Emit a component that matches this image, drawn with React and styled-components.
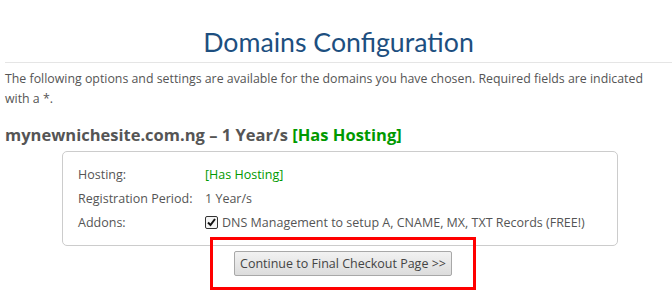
import React from 'react';
import styled, { createGlobalStyle } from 'styled-components';

const GlobalStyle = createGlobalStyle`
    body {
        margin: 0;
        background: #fff;
        font-family: "Open Sans", Lato, sans-serif;
        color: #555;
    }
`;

const Page = styled.div`
    width: 672px;
    padding: 0 0 0 5px;
    box-sizing: border-box;
`;

const Title = styled.h1`
    margin: 0;
    padding: 28px 0 6px;
    text-align: center;
    font-family: Lato, sans-serif;
    font-size: 26.7px;
    font-weight: 400;
    color: #1d4f80;
    border-bottom: 1px solid #e5e5e5;
    line-height: 28px;
`;

const Intro = styled.p`
    margin: 0;
    max-width: 655px;
    padding-top: 6px;
    font-size: 12.35px;
    line-height: 20px;
`;

const DomainHeading = styled.h2`
    margin: 0;
    padding-top: 16px;
    font-size: 16.5px;
    font-weight: 700;
    line-height: 20px;
    color: #555;
`;

const Green = styled.span`
    color: #009900;
`;

const Box = styled.div`
    margin: 6px 0 0 57px;
    width: 556px;
    height: 95px;
    box-sizing: border-box;
    border: 1px solid #ccc;
    border-radius: 5px;
    padding: 10px 0 0 15px;
    display: grid;
    grid-template-columns: 127px 1fr;
    grid-auto-rows: 24px;
    align-items: center;
    font-size: 12.5px;
`;

const Label = styled.div``;

const Value = styled.div`
    display: flex;
    align-items: center;
    gap: 4px;
    color: ${p => (p.$green ? '#009900' : '#555')};
`;

const Check = styled.span`
    width: 13px;
    height: 13px;
    box-sizing: border-box;
    border: 1px solid #333;
    border-radius: 2px;
    background: #f4f4f4;
    display: inline-flex;
    align-items: center;
    justify-content: center;
`;

const Highlight = styled.div`
    margin: -9px 0 0 205px;
    width: 266px;
    height: 53px;
    box-sizing: border-box;
    border: 3px solid #f00;
    display: flex;
    align-items: center;
    justify-content: center;
`;

const Button = styled.button`
    height: 25px;
    padding: 0 5px;
    font-family: inherit;
    font-size: 12.5px;
    color: #444;
    background: linear-gradient(#f2f2f2, #dcdcdc);
    border: 1px solid #a8a8a8;
    border-radius: 2px;
`;

const App = () => (
    <Page>
        <GlobalStyle />
        <Title>Domains Configuration</Title>
        <Intro>
            The following options and settings are available for the domains you have chosen. Required fields are indicated
            with a *.
        </Intro>
        <DomainHeading>
            mynewnichesite.com.ng – 1 Year/s <Green>[Has Hosting]</Green>
        </DomainHeading>
        <Box>
            <Label>Hosting:</Label>
            <Value $green>[Has Hosting]</Value>
            <Label>Registration Period:</Label>
            <Value>1 Year/s</Value>
            <Label>Addons:</Label>
            <Value>
                <Check>
                    <svg width="11" height="11" viewBox="0 0 11 11">
                        <path d="M2 5.5 L4.5 8 L9 2" fill="none" stroke="#111" strokeWidth="2" />
                    </svg>
                </Check>
                DNS Management to setup A, CNAME, MX, TXT Records (FREE!)
            </Value>
        </Box>
        <Highlight>
            <Button>Continue to Final Checkout Page &gt;&gt;</Button>
        </Highlight>
    </Page>
);

export default App;
